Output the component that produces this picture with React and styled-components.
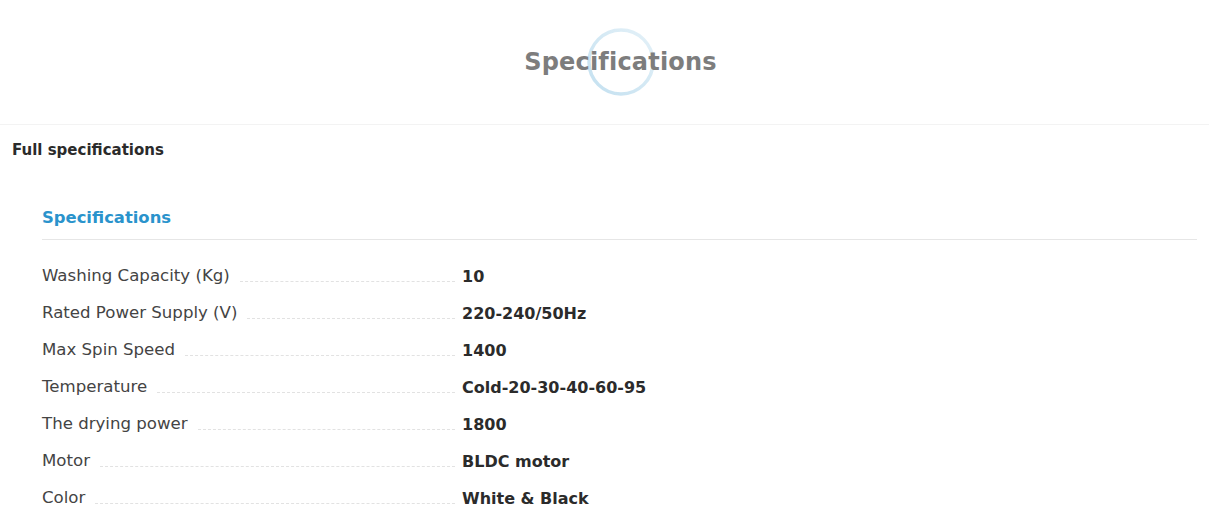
import React from "react";
import styled, { createGlobalStyle } from "styled-components";

const GlobalStyle = createGlobalStyle`
  html, body { margin: 0; padding: 0; background: #fff; }
  body { font-family: "DejaVu Sans", "Open Sans", sans-serif; color: #333; }
`;

const Page = styled.div`
  width: 1209px;
`;

const Header = styled.header`
  height: 124px;
  border-bottom: 1px solid #f3f3f3;
  display: flex;
  align-items: center;
  justify-content: center;
`;

const TitleWrap = styled.div`
  position: relative;
  display: flex;
  align-items: center;
  justify-content: center;
  margin-left: 32px;
`;

const Ring = styled.svg`
  position: absolute;
  left: 50%;
  top: 50%;
  width: 70px;
  height: 70px;
  transform: translate(-50%, -50%);
  z-index: 0;
`;

const MainTitle = styled.h1`
  position: relative;
  z-index: 1;
  margin: 0;
  font-size: 24px;
  font-weight: 700;
  color: #7d7d7d;
  letter-spacing: 0.2px;
`;

const FullLabel = styled.h2`
  margin: 0;
  padding: 15px 12px 0;
  font-size: 15px;
  font-weight: 700;
  color: #2b2b2b;
  line-height: 20px;
`;

const Section = styled.section`
  padding: 47px 12px 0 42px;
`;

const SectionTitle = styled.h3`
  margin: 0;
  padding-bottom: 10px;
  border-bottom: 1px solid #e6e6e6;
  font-size: 16.4px;
  font-weight: 700;
  line-height: 22px;
  color: #2a93cc;
`;

const List = styled.dl`
  margin: 0;
  padding-top: 24px;
`;

const Row = styled.div`
  display: grid;
  grid-template-columns: 413px 1fr;
  column-gap: 7px;
  height: 37px;
  align-items: start;
`;

const Label = styled.dt`
  display: flex;
  align-items: flex-end;
  gap: 10px;
  font-size: 16.6px;
  line-height: 24px;
  color: #444;
  &::after {
    content: "";
    flex: 1;
    border-bottom: 1px dashed #e2e2e2;
    margin-bottom: 6px;
  }
`;

const Value = styled.dd`
  margin: 0;
  font-size: 16px;
  font-weight: 700;
  line-height: 24px;
  color: #2b2b2b;
  padding-top: 1px;
`;

const specs = [
  ["Washing Capacity (Kg)", "10"],
  ["Rated Power Supply (V)", "220-240/50Hz"],
  ["Max Spin Speed", "1400"],
  ["Temperature", "Cold-20-30-40-60-95"],
  ["The drying power", "1800"],
  ["Motor", "BLDC motor"],
  ["Color", "White & Black"],
];

export default function App() {
  return (
    <Page>
      <GlobalStyle />
      <Header>
        <TitleWrap>
          <Ring viewBox="0 0 70 70">
            <defs>
              <linearGradient id="rg" x1="0" y1="1" x2="1" y2="0">
                <stop offset="0" stopColor="#c3e0f0" />
                <stop offset="1" stopColor="#e4f1f8" />
              </linearGradient>
            </defs>
            <circle cx="35" cy="35" r="32" fill="none" stroke="url(#rg)" strokeWidth="3.5" />
          </Ring>
          <MainTitle>Specifications</MainTitle>
        </TitleWrap>
      </Header>
      <FullLabel>Full specifications</FullLabel>
      <Section>
        <SectionTitle>Specifications</SectionTitle>
        <List>
          {specs.map(([k, v]) => (
            <Row key={k}>
              <Label>{k}</Label>
              <Value>{v}</Value>
            </Row>
          ))}
        </List>
      </Section>
    </Page>
  );
}
